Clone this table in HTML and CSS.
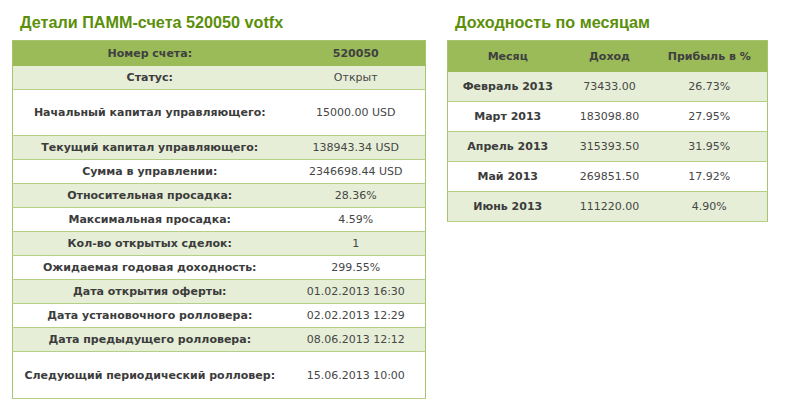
FILE: index.html
```html
<!DOCTYPE html>
<html lang="ru">
<head>
<meta charset="utf-8">
<link rel="stylesheet" href="styles.css">
</head>
<body>
<div class="page">
  <section class="block block-left">
    <h2 class="title">Детали ПАММ-счета 520050 votfx</h2>
    <table class="grid details">
      <colgroup><col class="c-label"><col class="c-value"></colgroup>
      <tr class="head"><th>Номер счета:</th><th>520050</th></tr>
      <tr class="alt"><th>Статус:</th><td>Открыт</td></tr>
      <tr class="tall"><th>Начальный капитал управляющего:</th><td>15000.00 USD</td></tr>
      <tr class="alt"><th>Текущий капитал управляющего:</th><td>138943.34 USD</td></tr>
      <tr><th>Сумма в управлении:</th><td>2346698.44 USD</td></tr>
      <tr class="alt"><th>Относительная просадка:</th><td>28.36%</td></tr>
      <tr><th>Максимальная просадка:</th><td>4.59%</td></tr>
      <tr class="alt"><th>Кол-во открытых сделок:</th><td>1</td></tr>
      <tr><th>Ожидаемая годовая доходность:</th><td>299.55%</td></tr>
      <tr class="alt"><th>Дата открытия оферты:</th><td>01.02.2013 16:30</td></tr>
      <tr><th>Дата установочного ролловера:</th><td>02.02.2013 12:29</td></tr>
      <tr class="alt"><th>Дата предыдущего ролловера:</th><td>08.06.2013 12:12</td></tr>
      <tr class="tall last"><th>Следующий периодический ролловер:</th><td>15.06.2013 10:00</td></tr>
    </table>
  </section>
  <section class="block block-right">
    <h2 class="title">Доходность по месяцам</h2>
    <table class="grid months">
      <colgroup><col class="m1"><col class="m2"><col class="m3"></colgroup>
      <tr class="head"><th>Месяц</th><th>Доход</th><th>Прибыль в %</th></tr>
      <tr class="alt"><th>Февраль 2013</th><td>73433.00</td><td>26.73%</td></tr>
      <tr><th>Март 2013</th><td>183098.80</td><td>27.95%</td></tr>
      <tr class="alt"><th>Апрель 2013</th><td>315393.50</td><td>31.95%</td></tr>
      <tr><th>Май 2013</th><td>269851.50</td><td>17.92%</td></tr>
      <tr class="alt"><th>Июнь 2013</th><td>111220.00</td><td>4.90%</td></tr>
    </table>
  </section>
</div>
</body>
</html>
```

FILE: styles.css
```css
html, body {
  margin: 0;
  padding: 0;
  background: #ffffff;
}
.page {
  display: flex;
  align-items: flex-start;
  gap: 21px;
  padding: 12px 0 0 12px;
  font-family: "DejaVu Sans", Verdana, sans-serif;
  font-size: 11px;
  color: #444444;
}
.block-left { width: 414px; }
.block-right { width: 321px; }
.title {
  margin: 0 0 8px 8px;
  font-family: "Liberation Sans", Arial, sans-serif;
  font-size: 16.2px;
  line-height: 20px;
  font-weight: bold;
  color: #5b8f0a;
}
.grid {
  width: 100%;
  border-collapse: collapse;
  border: 1px solid #a6c46e;
  table-layout: fixed;
}
.grid th, .grid td {
  text-align: center;
  vertical-align: middle;
  padding: 0 4px;
  border-bottom: 1px solid #b5cf87;
  white-space: nowrap;
}
.grid th { font-weight: bold; color: #3c3c3c; }
.grid td { font-weight: normal; color: #474747; }
.grid tr.head th {
  background: #9bbb59;
  color: #404040;
  border-bottom-color: #9bbb59;
}
.grid tr.alt th, .grid tr.alt td { background: #e6eed7; }
.details .c-label { width: 274px; }
.details tr { height: 24px; }
.details tr.head { height: 25px; }
.details tr.tall { height: 46px; }
.details tr.last { height: 47px; }
.months .m1 { width: 120px; }
.months .m2 { width: 84px; }
.months tr { height: 30px; }
.months tr.head { height: 31px; }
.months th, .months td { font-size: 11px; }
```
